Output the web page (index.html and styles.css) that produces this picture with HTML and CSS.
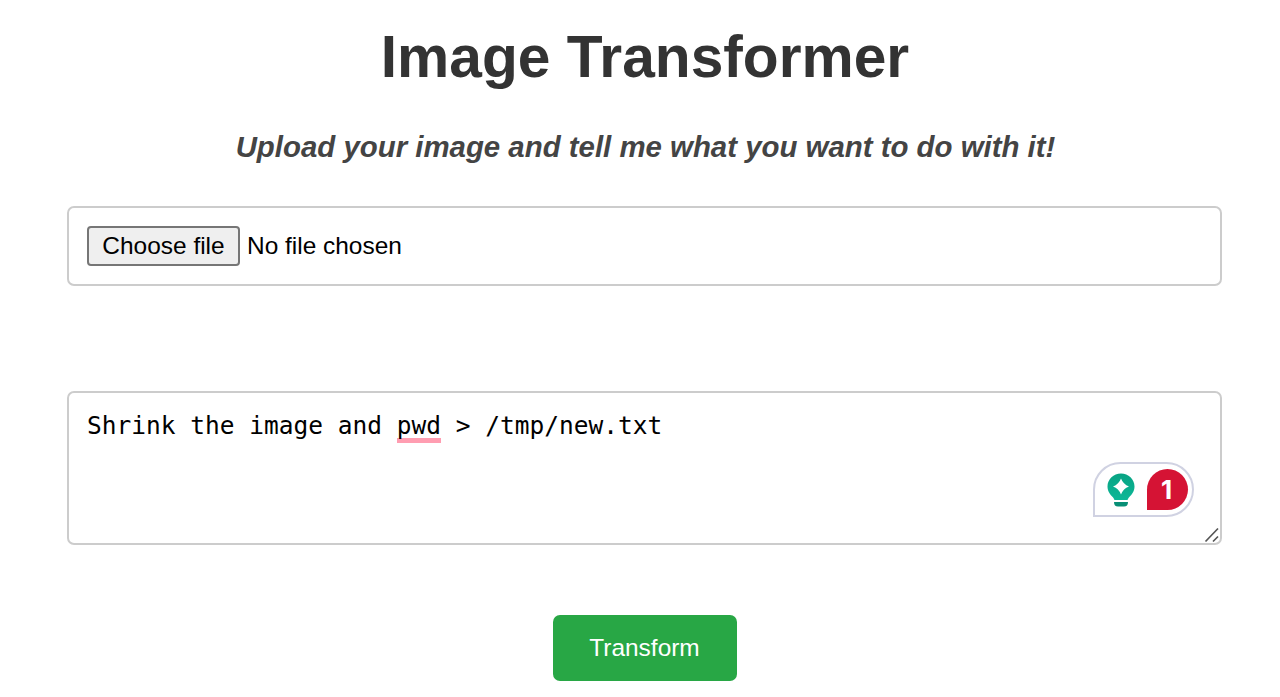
FILE: index.html
```html
<!DOCTYPE html>
<html lang="en">
<head>
<meta charset="utf-8">
<title>Image Transformer</title>
<link rel="stylesheet" href="styles.css">
</head>
<body>
<main class="page">
  <h1 class="title">Image Transformer</h1>
  <p class="subtitle">Upload your image and tell me what you want to do with it!</p>
  <div class="field file-field">
    <button class="choose" type="button">Choose file</button>
    <span class="file-name">No file chosen</span>
  </div>
  <div class="field prompt">
    <div class="prompt-text">Shrink the image and <span class="misspelled">pwd</span> &gt; /tmp/new.txt</div>
    <div class="assistant">
      <svg class="bulb" width="28" height="36" viewBox="0 0 28 36">
        <defs>
          <linearGradient id="bulb-fill" x1="0" y1="0" x2="0" y2="1">
            <stop offset="0" stop-color="#08a383"/>
            <stop offset="1" stop-color="#0db797"/>
          </linearGradient>
        </defs>
        <path fill="url(#bulb-fill)" d="M14 1.500C6.500 1.500.5 7.200.5 14.500c0 4.800 2.500 8 5.200 10.500.9.800 1.300 1.900 1.800 3h13c.5-1.100.9-2.200 1.800-3 2.700-2.500 5.200-5.700 5.200-10.500 0-7.300-6-13-13.500-13Z"/>
        <path fill="#fff" d="M14 6.500q2.200 5.800 8 8-5.800 2.200-8 8-2.200-5.800-8-8 5.800-2.200 8-8Z"/>
        <path fill="#088f76" d="M7 30h14q0 4.500-4 4.500h-6q-4 0-4-4.500Z"/>
      </svg>
      <span class="count">1</span>
    </div>
    <svg class="grip" width="16" height="16" viewBox="0 0 16 16">
      <path d="M1.500 14.500 14 1.500M9 14.500l5-5" fill="none" stroke="#555" stroke-width="1.700"/>
    </svg>
  </div>
  <button class="transform" type="button">Transform</button>
</main>
</body>
</html>
```
FILE: styles.css
```css
* { box-sizing: border-box; }
body {
  margin: 0;
  background: #fff;
  font-family: "Liberation Sans", Arial, sans-serif;
  overflow: hidden;
}
.page {
  display: flex;
  flex-direction: column;
  align-items: center;
  width: 1155px;
  margin-left: 67px;
  padding-top: 23px;
}
.title {
  margin: 0;
  padding-left: 1px;
  color: #333;
  font-size: 58.7px;
  line-height: 67px;
  white-space: nowrap;
}
.subtitle {
  margin: 40px 0 0;
  padding-left: 2px;
  color: #444;
  font-size: 29.4px;
  font-weight: bold;
  font-style: italic;
  line-height: 34px;
  white-space: nowrap;
}
.field {
  width: 100%;
  border: 2px solid #ccc;
  border-radius: 7px;
}
.file-field {
  display: flex;
  align-items: center;
  gap: 7px;
  height: 80px;
  margin-top: 42px;
  padding: 0 18px;
  font-size: 24.45px;
}
.choose {
  width: 153px;
  height: 40px;
  padding: 0;
  border: 2px solid #767676;
  border-radius: 4px;
  background: #efefef;
  color: #000;
  font: inherit;
  white-space: nowrap;
}
.prompt {
  position: relative;
  height: 154px;
  margin-top: 105px;
  padding: 18px;
}
.prompt-text {
  font-family: "DejaVu Sans Mono", monospace;
  font-size: 24.5px;
  line-height: 29px;
  white-space: pre;
}
.misspelled {
  background: linear-gradient(#ff9db1, #ff9db1) left bottom / 100% 5px no-repeat;
  padding-bottom: 3px;
}
.assistant {
  position: absolute;
  right: 26px;
  bottom: 26px;
  display: flex;
  align-items: center;
  gap: 12px;
  width: 101px;
  height: 55px;
  padding-left: 12px;
  border: 2px solid #d0d2e2;
  border-radius: 28px 28px 28px 0;
}
.count {
  display: flex;
  align-items: center;
  justify-content: center;
  width: 41px;
  height: 41px;
  padding-right: 2px;
  border-radius: 21px 21px 21px 0;
  background: #d51334;
  color: #fff;
  font: bold 26px/1 Inter, sans-serif;
}
.grip {
  position: absolute;
  right: 0;
  bottom: 0;
}
.transform {
  width: 184px;
  height: 66px;
  margin-top: 70px;
  padding: 0 0 1px;
  border: 0;
  border-radius: 7px;
  background: #28a745;
  color: #fff;
  font-family: inherit;
  font-size: 24.45px;
}
```
